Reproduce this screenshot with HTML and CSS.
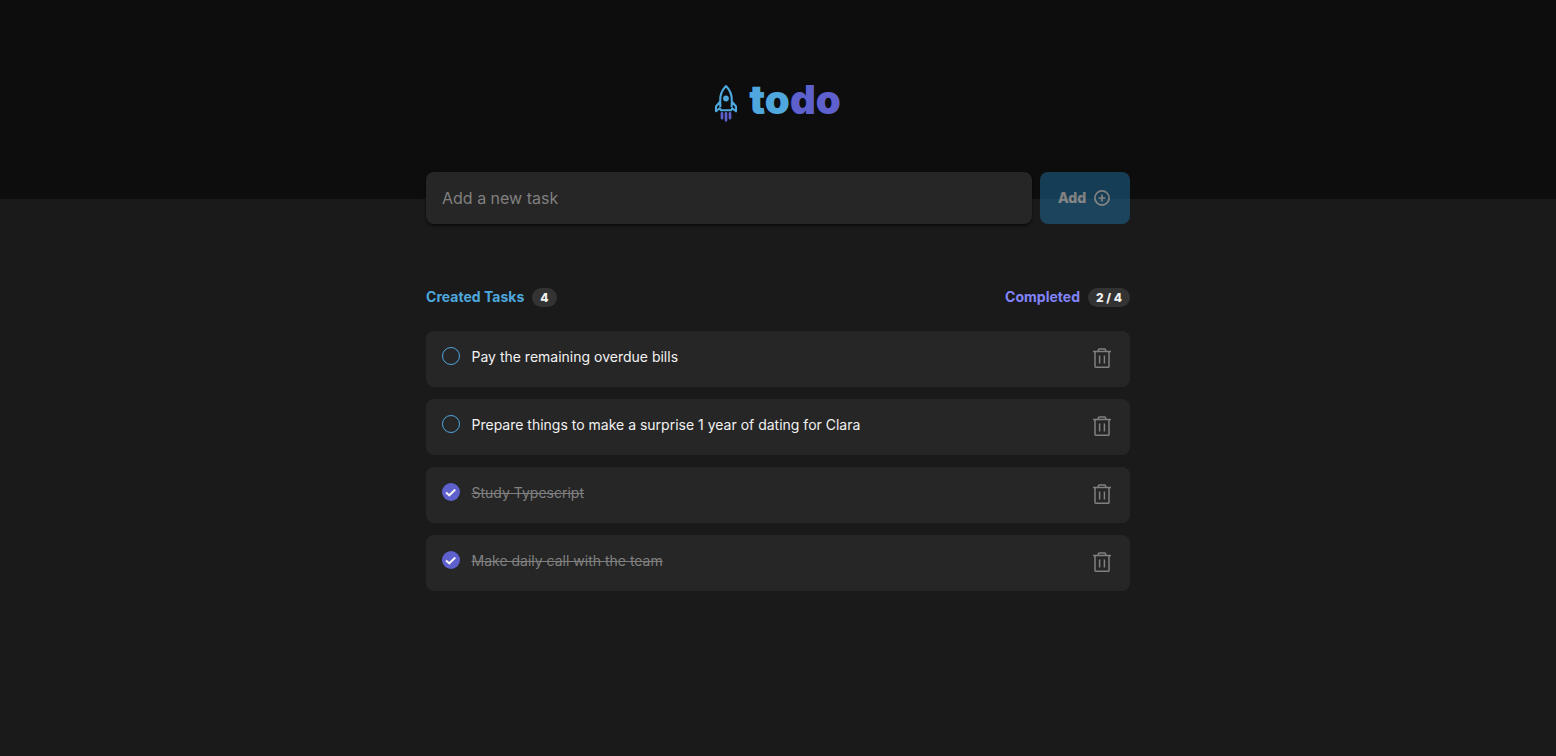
FILE: index.html
```html
<!DOCTYPE html>
<html lang="en">
<head>
<meta charset="utf-8">
<title>todo</title>
<link rel="stylesheet" href="styles.css">
</head>
<body>
<svg class="sprite" aria-hidden="true">
  <symbol id="trash" viewBox="0 0 18 20">
    <path d="M0 3.600H18M2 3.600V18.600Q2 19.200 2.600 19.200H15.400Q16 19.200 16 18.600V3.600M5.400 3.600V1.800Q5.400 1 6.200 1H11.800Q12.600 1 12.600 1.800V3.600M6.600 7.500V15.500M11.400 7.500V15.500" fill="none" stroke="currentColor" stroke-width="1.500"/>
  </symbol>
  <symbol id="done" viewBox="0 0 18 18">
    <circle cx="9" cy="9" r="9" fill="#5e60ce"/>
    <path d="M4 9.400L7.300 12.300L13.300 6.500" fill="none" stroke="#f2f2f2" stroke-width="2"/>
  </symbol>
  <symbol id="open" viewBox="0 0 18 18">
    <circle cx="9" cy="9" r="8.5" fill="none" stroke="#4ea8de" stroke-width="1"/>
  </symbol>
</svg>
<header class="header">
  <div class="logo">
    <svg class="rocket" viewBox="0 0 24 38" width="24" height="38">
      <path d="M12 2C8.500 5.500 5.800 11 6.200 17.500L2 22.500V27.300L5.800 24.200L7 26.200H17L18.200 24.200L22 27.300V22.500L17.800 17.500C18.200 11 15.500 5.500 12 2ZM6.200 17.500L6.400 23M17.800 17.500L17.600 23" fill="none" stroke="#4ea8de" stroke-width="2.100" stroke-linejoin="round"/>
      <circle cx="12" cy="14.500" r="2.900" fill="#4ea8de"/>
      <path d="M8 29.300V34.200M12 29.300V36.300M16 29.300V34.200" stroke="#5e60ce" stroke-width="2.700" stroke-linecap="round"/>
    </svg>
    <h1 class="wordmark"><span class="to">to</span><span class="do">do</span></h1>
  </div>
</header>
<main class="container">
  <form class="new-task">
    <input class="task-input" type="text" placeholder="Add a new task">
    <button class="add" type="button"><span class="add-label">Add</span>
      <svg width="16" height="16" viewBox="0 0 16 16" fill="none" stroke="currentColor" stroke-width="1.700"><circle cx="8" cy="8" r="7.100"/><path d="M8 4.500V11.500M4.500 8H11.500"/></svg>
    </button>
  </form>
  <div class="summary">
    <div class="stat created"><span class="label">Created Tasks</span><span class="count">4</span></div>
    <div class="stat completed"><span class="label">Completed</span><span class="count">2 / 4</span></div>
  </div>
  <ul class="tasks">
    <li class="task"><svg class="check"><use href="#open"/></svg><p class="text">Pay the remaining overdue bills</p><svg class="trash"><use href="#trash"/></svg></li>
    <li class="task"><svg class="check"><use href="#open"/></svg><p class="text">Prepare things to make a surprise 1 year of dating for Clara</p><svg class="trash"><use href="#trash"/></svg></li>
    <li class="task"><svg class="check"><use href="#done"/></svg><p class="text finished">Study Typescript</p><svg class="trash"><use href="#trash"/></svg></li>
    <li class="task"><svg class="check"><use href="#done"/></svg><p class="text finished">Make daily call with the team</p><svg class="trash"><use href="#trash"/></svg></li>
  </ul>
</main>
</body>
</html>
```
FILE: styles.css
```css
* { box-sizing: border-box; margin: 0; padding: 0; }
body { background: #1a1a1a; font-family: Inter, sans-serif; min-height: 100vh; }
.sprite { display: none; }
.header { height: 199px; background: #0d0d0d; padding-top: 76px; }
.logo { display: flex; justify-content: center; gap: 11px; padding-right: 1px; }
.rocket { margin-top: 8px; }
.wordmark { font-size: 40px; line-height: 48px; font-weight: 900; }
.to { color: #4ea8de; }
.do { color: #5e60ce; }
.container { width: 704px; margin: -27px auto 0; }
.new-task { display: flex; gap: 8px; }
.task-input { flex: 1; height: 52px; padding: 0 16px; border: 0; border-radius: 8px; background: #262626; color: #f2f2f2; font: 400 16px Inter, sans-serif; box-shadow: 0 2px 3px rgba(0, 0, 0, .55); }
.task-input::placeholder { color: #808080; }
.add { width: 90px; height: 52px; display: flex; align-items: center; justify-content: center; gap: 8px; padding-right: 2px; border: 0; border-radius: 8px; background: #1e6f9f; color: #f2f2f2; font: 800 14px Inter, sans-serif; opacity: .5; }
.add-label { padding-bottom: 1px; }
.summary { display: flex; justify-content: space-between; margin-top: 64px; height: 19px; }
.stat { display: flex; align-items: flex-start; gap: 8px; font-size: 14px; font-weight: 700; line-height: 19px; }
.label { line-height: 17px; letter-spacing: .02px; }
.created { color: #4ea8de; }
.completed { color: #8284fa; }
.count { padding: 0 8px; border-radius: 10px; background: #333; color: #f2f2f2; font-size: 12px; font-weight: 800; }
.tasks { list-style: none; display: flex; flex-direction: column; gap: 12px; margin-top: 24px; }
.task { display: flex; height: 56px; padding: 16px; border-radius: 8px; background: #262626; }
.check { width: 18px; height: 18px; }
.text { flex: 1; margin-left: 11.500px; color: #f2f2f2; font-size: 14px; line-height: 20px; }
.finished { color: #808080; text-decoration: line-through; }
.trash { width: 18px; height: 20px; margin: 1px 3px 0 0; color: #808080; }
```
